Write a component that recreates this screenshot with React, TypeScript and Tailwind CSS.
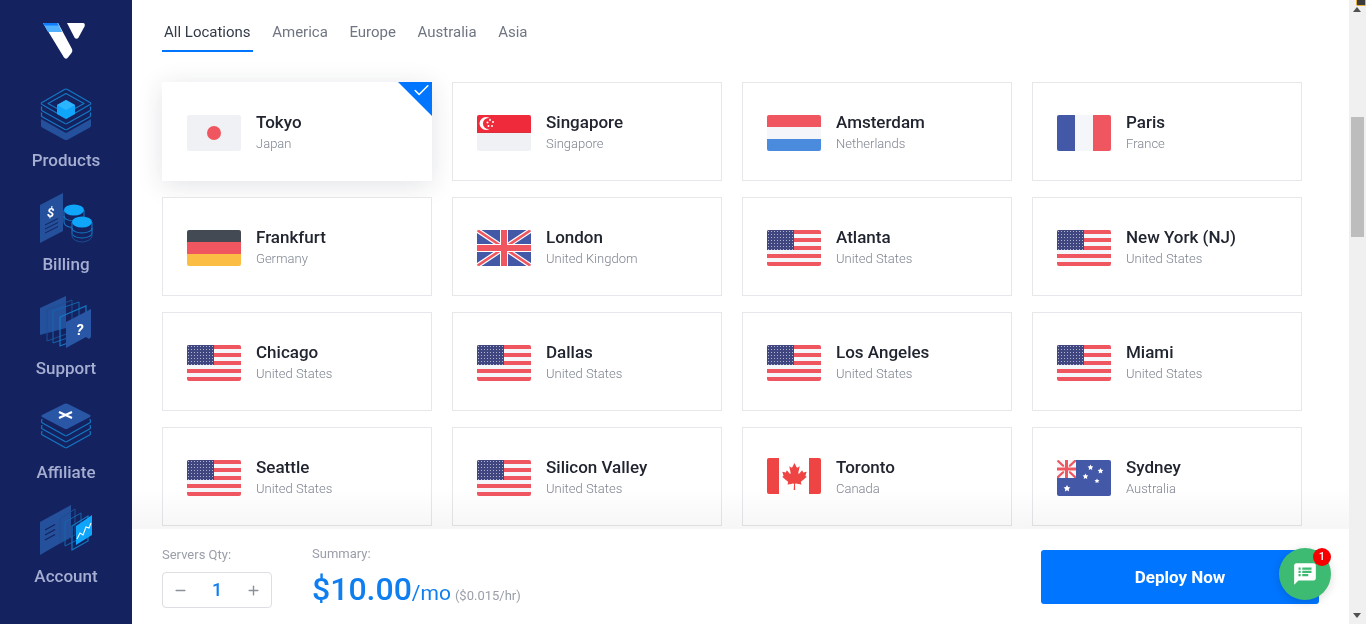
import { Check, Minus, Plus } from 'lucide-react';
import { FaCanadianMapleLeaf } from 'react-icons/fa';

const RED = '#f0565f';
const NAVY = '#3f4680';
const BLUE = '#4458a8';
const OFFWHITE = '#f5f6fa';

function Star({ x, y, r }: { x: number; y: number; r: number }) {
  const pts = Array.from({ length: 10 }, (_, i) => {
    const rad = i % 2 ? r * 0.5 : r;
    const a = (Math.PI / 5) * i - Math.PI / 2;
    return `${x + rad * Math.cos(a)},${y + rad * Math.sin(a)}`;
  }).join(' ');
  return <polygon points={pts} fill="#fff" />;
}

function Flag({ code }: { code: string }) {
  const base = 'block h-[36px] w-[54px] shrink-0 rounded-[2px] overflow-hidden';
  if (code === 'ca') {
    return (
      <div className="mt-[2px] flex h-[36px] w-[54px] shrink-0 items-center justify-center overflow-hidden rounded-[2px] bg-white">
        <div className="h-full w-[12px] bg-[#ef4444]" />
        <div className="flex flex-1 items-center justify-center">
          <FaCanadianMapleLeaf size={27} className="text-[#ef4444]" />
        </div>
        <div className="h-full w-[12px] bg-[#ef4444]" />
      </div>
    );
  }
  return (
    <svg viewBox="0 0 54 36" className={`mt-[4px] ${base}`}>
      {code === 'jp' && (
        <>
          <rect width="54" height="36" fill="#f0f1f5" />
          <circle cx="27" cy="18" r="7" fill={RED} />
        </>
      )}
      {code === 'sg' && (
        <>
          <rect width="54" height="36" fill="#f0f1f5" />
          <rect width="54" height="17" fill="#ef2b3b" />
          <rect y="17" width="54" height="1" fill="#d9303c" />
          <circle cx="9" cy="8.500" r="6.500" fill="#fff" />
          <circle cx="11.500" cy="8.500" r="5.500" fill="#ef2b3b" />
          {[
            [13, 5],
            [10.500, 7.500],
            [16, 7],
            [11.500, 11],
            [15, 11],
          ].map(([x, y]) => (
            <circle key={`${x}-${y}`} cx={x} cy={y} r="1" fill="#fff" />
          ))}
        </>
      )}
      {code === 'nl' && (
        <>
          <rect width="54" height="12" fill={RED} />
          <rect y="12" width="54" height="12" fill={OFFWHITE} />
          <rect y="24" width="54" height="12" fill="#4b8bde" />
        </>
      )}
      {code === 'fr' && (
        <>
          <rect width="18" height="36" fill={BLUE} />
          <rect x="18" width="18" height="36" fill={OFFWHITE} />
          <rect x="36" width="18" height="36" fill={RED} />
        </>
      )}
      {code === 'de' && (
        <>
          <rect width="54" height="12" fill="#434a54" />
          <rect y="12" width="54" height="12" fill={RED} />
          <rect y="24" width="54" height="12" fill="#fbbd44" />
        </>
      )}
      {code === 'gb' && (
        <>
          <rect width="54" height="36" fill={BLUE} />
          <path d="M0 0L54 36M54 0L0 36" stroke="#fff" strokeWidth="5" />
          <path d="M0 0L54 36M54 0L0 36" stroke={RED} strokeWidth="2.600" />
          <path d="M27 0V36M0 18H54" stroke="#fff" strokeWidth="8" />
          <path d="M27 0V36M0 18H54" stroke={RED} strokeWidth="6" />
        </>
      )}
      {code === 'us' && (
        <>
          <defs>
            <pattern id="usdots" width="3" height="3" patternUnits="userSpaceOnUse">
              <circle cx="1.500" cy="1.500" r="0.500" fill="#d5d7e8" />
            </pattern>
          </defs>
          <rect width="54" height="36" fill={OFFWHITE} />
          {[0, 8, 16, 24, 32].map((y) => (
            <rect key={y} y={y} width="54" height="4" fill={RED} />
          ))}
          <rect width="27" height="20" fill={NAVY} />
          <rect width="27" height="20" fill="url(#usdots)" />
        </>
      )}
      {code === 'au' && (
        <>
          <rect width="54" height="36" fill={BLUE} />
          <svg width="19" height="18" viewBox="0 0 19 18">
            <rect width="19" height="18" fill={OFFWHITE} />
            <path d="M0 0L19 18M19 0L0 18" stroke={RED} strokeWidth="2.200" />
            <path d="M9.500 0V18M0 9H19" stroke="#fff" strokeWidth="4.500" />
            <path d="M9.500 0V18M0 9H19" stroke={RED} strokeWidth="3" />
          </svg>
          <Star x={10} y={28.500} r={3.600} />
          <Star x={33.500} y={7.500} r={3} />
          <Star x={28.500} y={16.500} r={3} />
          <Star x={43.500} y={11} r={3} />
          <Star x={40} y={21} r={2.600} />
        </>
      )}
    </svg>
  );
}

const LOCATIONS = [
  { city: 'Tokyo', country: 'Japan', flag: 'jp', selected: true },
  { city: 'Singapore', country: 'Singapore', flag: 'sg' },
  { city: 'Amsterdam', country: 'Netherlands', flag: 'nl' },
  { city: 'Paris', country: 'France', flag: 'fr' },
  { city: 'Frankfurt', country: 'Germany', flag: 'de' },
  { city: 'London', country: 'United Kingdom', flag: 'gb' },
  { city: 'Atlanta', country: 'United States', flag: 'us' },
  { city: 'New York (NJ)', country: 'United States', flag: 'us' },
  { city: 'Chicago', country: 'United States', flag: 'us' },
  { city: 'Dallas', country: 'United States', flag: 'us' },
  { city: 'Los Angeles', country: 'United States', flag: 'us' },
  { city: 'Miami', country: 'United States', flag: 'us' },
  { city: 'Seattle', country: 'United States', flag: 'us' },
  { city: 'Silicon Valley', country: 'United States', flag: 'us' },
  { city: 'Toronto', country: 'Canada', flag: 'ca' },
  { city: 'Sydney', country: 'Australia', flag: 'au' },
];

const TABS = ['All Locations', 'America', 'Europe', 'Australia', 'Asia'];

const LINE = '#1477c4';
const SOLID = '#24509c';
const CYAN = '#0ea5fb';
const SIDE = '#14235f';

function Logo() {
  return (
    <svg viewBox="42 20 48 42" className="h-[42px] w-[48px]">
      <path d="M43 23H58L72 49Q73 51 71.500 53L67.500 58Q65.500 59.500 64 57.500Z" fill="#fff" />
      <path d="M43 23H58L62 32H48Z" fill="#51b1ff" />
      <path d="M43 23H57L58.500 25.500H44.500Z" fill="#0f7bff" />
      <path d="M67 23H83Q85.500 23 84.500 26.500L78.500 37.500Q76.500 40 74.500 37.500Z" fill="#fff" />
    </svg>
  );
}

function ProductsIcon() {
  return (
    <svg viewBox="34 84 64 64" className="h-16 w-16" fill="none">
      <path d="M41 119L66 133L91 119V126Q91 127 89 128L68 139.500Q66 140.500 64 139.500L43 128Q41 127 41 126Z" fill={SOLID} />
      <g stroke={LINE} strokeWidth="1.200" strokeLinejoin="round">
        <path d="M64.500 89.500Q66 88.500 67.500 89.500L90 102.500Q91.500 103.500 90 104.500L67.500 117.500Q66 118.500 64.500 117.500L42 104.500Q40.500 103.500 42 102.500Z" />
        <path d="M41.500 106.500V109.500Q41.500 110.500 42.500 111L65 123.500Q66 124 67 123.500L89.500 111Q90.500 110.500 90.500 109.500V106.500" />
        <path d="M41.500 112.500V115.500Q41.500 116.500 42.500 117L65 129.500Q66 130 67 129.500L89.500 117Q90.500 116.500 90.500 115.500V112.500" />
        <path d="M48 103.500L66 93.500L84 103.500L66 113.500Z" />
      </g>
      <path d="M66 100L75 105V114L66 119L57 114V105Z" fill={CYAN} />
      <path d="M66 100L75 105L66 110L57 105Z" fill="#2cb4ff" />
    </svg>
  );
}

function BillingIcon() {
  return (
    <svg viewBox="34 188 64 64" className="h-16 w-16" fill="none">
      <path d="M40 205L63 193V231L40 243Z" fill={SOLID} />
      <text x="47" y="217" fill="#fff" fontSize="13" fontWeight="700" fontStyle="italic">
        $
      </text>
      <path d="M45 225L58 218.500M45 229L58 222.500M45 233L58 226.500" stroke={SIDE} strokeWidth="1" />
      <g stroke={LINE} strokeWidth="1.100">
        <path d="M64 210V216C64 219 69 221 74 221S84 219 84 216V210" />
        <path d="M64 216V222C64 225 67 227 72 227.500" />
        <path d="M72 222V228C72 231 77 233 82 233S92 231 92 228V222" />
        <path d="M72 228V233C72 236 77 238 82 238S92 236 92 233V228" />
      </g>
      <path d="M72 233V236C72 239 77 242 82 242S92 239 92 236V233" stroke="#1a4a8f" strokeWidth="1.100" />
      <ellipse cx="74" cy="210" rx="10" ry="5.500" fill={CYAN} />
      <ellipse cx="82" cy="222" rx="10" ry="5.500" fill={CYAN} />
    </svg>
  );
}

function SupportIcon() {
  return (
    <svg viewBox="34 292 64 64" className="h-16 w-16" fill="none">
      <path d="M40 308L66 296V328L40 335Z" fill={SOLID} />
      <path d="M47 310L72 300V332L47 341Z" stroke="#1a4f94" strokeWidth="1" />
      <path d="M53 311L79 302V334L53 343Z" stroke="#1564ad" strokeWidth="1" />
      <path d="M60 317L86 306V336L60 346Z" stroke={LINE} strokeWidth="1.200" />
      <path d="M66 322L91 309V337L89 339L86 337L66 348Z" fill="#2a56a6" />
      <text x="76" y="335" fill="#fff" fontSize="15" fontWeight="700" fontStyle="italic">
        ?
      </text>
    </svg>
  );
}

function AffiliateIcon() {
  return (
    <svg viewBox="34 396 64 64" className="h-16 w-16" fill="none">
      <g stroke={LINE} strokeWidth="1.200" strokeLinejoin="round">
        <path d="M42 419L41.500 421.500Q41.500 422.500 42.500 423L65 435.500Q66 436 67 435.500L89.500 423Q90.500 422.500 90.500 421.500L90 419" />
        <path d="M42 425L41.500 427.500Q41.500 428.500 42.500 429L65 441.500Q66 442 67 441.500L89.500 429Q90.500 428.500 90.500 427.500L90 425" />
        <path d="M42 431L41.500 433.500Q41.500 434.500 42.500 435L65 447.500Q66 448 67 447.500L89.500 435Q90.500 434.500 90.500 433.500L90 431" />
      </g>
      <path d="M64 404Q66 403 68 404L90 415Q91.500 416 90 417L68 428.500Q66 429.500 64 428.500L42 417Q40.500 416 42 415Z" fill="#2a56a6" />
      <path d="M59 412L72 418M72 412L59 418" stroke="#fff" strokeWidth="2.200" />
    </svg>
  );
}

function AccountIcon() {
  return (
    <svg viewBox="34 500 64 64" className="h-16 w-16" fill="none">
      <path d="M40 522L71 505V537L40 555Z" fill={SOLID} />
      <path d="M45 530L55 524.500M45 535L55 529.500M45 540L55 534.500" stroke={SIDE} strokeWidth="1.200" />
      <path d="M60 519L75 509V535L60 543Z" stroke="#1a4f94" strokeWidth="1" />
      <path d="M65 522L81 513V538L65 546Z" stroke="#1564ad" strokeWidth="1" />
      <path d="M72 526L88 516V541L72 550Z" stroke={LINE} strokeWidth="1.200" />
      <path d="M76 526L92 515V535L76 545Z" fill={CYAN} />
      <path d="M77 539L80 533L83 535L86 527L89 528L91 523" stroke="#fff" strokeWidth="1.100" />
    </svg>
  );
}

const NAV = [
  { label: 'Products', Icon: ProductsIcon },
  { label: 'Billing', Icon: BillingIcon },
  { label: 'Support', Icon: SupportIcon },
  { label: 'Affiliate', Icon: AffiliateIcon },
  { label: 'Account', Icon: AccountIcon },
];

function LocationCard({ city, country, flag, selected }: (typeof LOCATIONS)[number]) {
  return (
    <div
      className={`relative flex h-[99px] items-start gap-[15px] border pl-6 pt-7 ${
        selected ? 'border-white bg-white shadow-[0_4px_24px_rgba(30,40,70,0.13)]' : 'border-[#e5e7eb] bg-white'
      }`}
    >
      <Flag code={flag} />
      <div className="flex flex-col">
        <span className="text-[17px] font-medium leading-[22px] text-[#21252f]">{city}</span>
        <span className="mt-px text-[13px] font-light leading-5 text-[#7f8490]">{country}</span>
      </div>
      {selected && (
        <div className="absolute -right-px -top-px h-[34px] w-[34px] bg-[#0075ff] [clip-path:polygon(0_0,100%_0,100%_100%)]">
          <Check size={19} strokeWidth={2} className="absolute right-px -top-px text-white" />
        </div>
      )}
    </div>
  );
}

export default function App() {
  return (
    <div className="flex h-[624px] w-[1366px] overflow-hidden bg-white font-[Roboto,sans-serif]">
      <aside className="flex w-[132px] shrink-0 flex-col items-center bg-[#14235f] pt-5">
        <Logo />
        <div className="mt-[22px] flex flex-col items-center">
          {NAV.map(({ label, Icon }) => (
            <div key={label} className="flex h-[104px] flex-col items-center">
              <Icon />
              <span className="text-[17px] font-medium leading-6 text-[#a6aed2]">{label}</span>
            </div>
          ))}
        </div>
      </aside>

      <main className="flex min-w-0 flex-1 flex-col">
        <div className="relative min-h-0 flex-1 overflow-hidden pl-[30px]">
          <nav className="flex h-[52px] items-end gap-[17.6px]">
            {TABS.map((tab, i) => (
              <span
                key={tab}
                className={`flex h-[30px] items-start border-b-2 px-0.5 text-[15px] leading-5 ${
                  i === 0 ? 'border-[#0075ff] text-[#333a48]' : 'border-transparent text-[#6f7582]'
                }`}
              >
                {tab}
              </span>
            ))}
          </nav>
          <div className="mt-[30px] grid w-[1140px] grid-cols-4 gap-x-5 gap-y-4">
            {LOCATIONS.map((loc) => (
              <LocationCard key={loc.city} {...loc} />
            ))}
          </div>
          <div className="pointer-events-none absolute inset-x-0 bottom-0 h-10 bg-gradient-to-b from-white to-[#f6f6f6] mix-blend-multiply" />
        </div>

        <footer className="flex h-[95px] shrink-0 items-start bg-white pl-[30px] pr-[30px]">
          <div className="flex w-[110px] flex-col pt-[17px]">
            <span className="text-[13px] leading-[18px] text-[#9a9ea8]">Servers Qty:</span>
            <div className="mt-2 flex h-9 items-center justify-between rounded-[4px] border border-[#dcdee3] px-[10px]">
              <Minus size={15} strokeWidth={2.2} className="text-[#8b8f99]" />
              <span className="text-lg font-medium leading-none text-[#0f7ff0]">1</span>
              <Plus size={15} strokeWidth={2.2} className="text-[#8b8f99]" />
            </div>
          </div>
          <div className="ml-10 flex flex-col pt-4">
            <span className="text-[13px] leading-[18px] text-[#9a9ea8]">Summary:</span>
            <div className="mt-[6px] flex items-baseline">
              <span className="text-[32px] font-medium leading-10 text-[#0f7ff0]">$10.00</span>
              <span className="text-[21px] leading-10 text-[#0f7ff0]">/mo</span>
              <span className="ml-1 text-[13px] text-[#9a9ea8]">($0.015/hr)</span>
            </div>
          </div>
          <button className="ml-auto mt-[21px] flex h-[54px] w-[278px] items-center justify-center rounded-[3px] bg-[#0075ff] pt-0.5 text-[17px] font-bold text-white">
            Deploy Now
          </button>
        </footer>
      </main>

      <div className="relative w-[17px] shrink-0 bg-[#f0f0f0]">
        <div className="absolute right-0 top-0 h-[6px] w-[10px] rounded-b-[2px] border border-t-0 border-[#e8b23a] bg-[#3b3b3b]" />
        <div className="absolute left-[4px] top-[7px] h-0 w-0 border-x-[4px] border-b-[5px] border-x-transparent border-b-[#505050]" />
        <div className="absolute left-[2px] top-[117px] h-[120px] w-[13px] bg-[#bdbdbd]" />
        <div className="absolute bottom-[6px] left-[4px] h-0 w-0 border-x-[4px] border-t-[5px] border-x-transparent border-t-[#505050]" />
      </div>

      <div className="absolute left-[1279px] top-[548px] flex h-[52px] w-[52px] items-center justify-center rounded-full bg-[#3dbb72] shadow-[0_2px_10px_rgba(0,0,0,0.15)]">
        <svg viewBox="0 0 24 24" className="h-[26px] w-[26px]">
          <path d="M20 2H4C2.900 2 2 2.900 2 4V22L6 18H20C21.100 18 22 17.100 22 16V4C22 2.900 21.100 2 20 2Z" fill="#fff" />
          <path d="M6 6H8V8H6ZM6 9H8V11H6ZM6 12H8V14H6ZM9.500 6H18V8H9.500ZM9.500 9H18V11H9.500ZM9.500 12H15V14H9.500Z" fill="#3dbb72" />
        </svg>
        <span className="absolute right-0 top-0 flex h-[18px] w-[18px] items-center justify-center rounded-full bg-[#f60000] text-[11px] font-medium text-white">
          1
        </span>
      </div>
    </div>
  );
}
